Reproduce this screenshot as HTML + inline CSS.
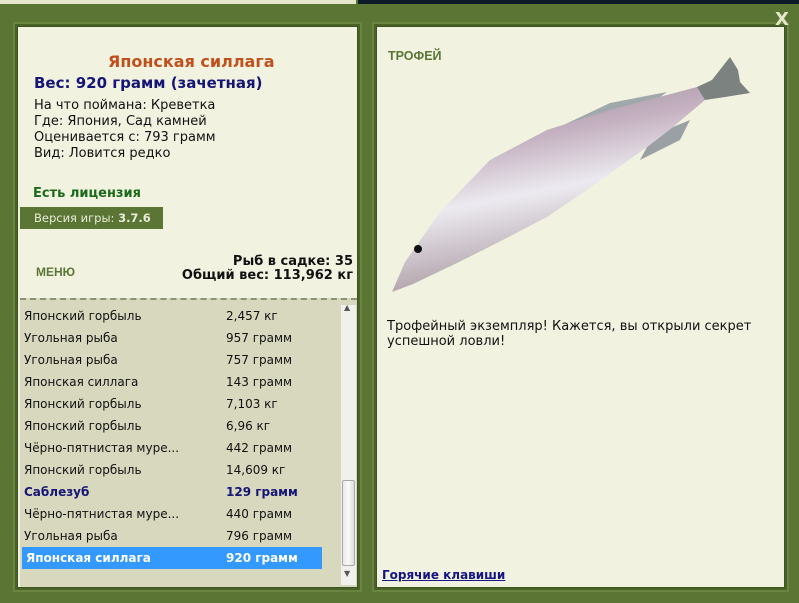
<!DOCTYPE html>
<html><head><meta charset="utf-8"><style>
*{margin:0;padding:0;box-sizing:border-box}
body{width:799px;height:603px;overflow:hidden;background:#5b7535;position:relative;font-family:Tahoma,"DejaVu Sans","Liberation Sans",sans-serif;font-size:13px;color:#111}
.a{position:absolute;white-space:nowrap}
.panel{position:absolute;background:#f2f2e1;border:2px solid #4a6228;box-shadow:0 0 0 2px #6a8540, inset 0 0 0 1px #3d5220}
.row{position:absolute;left:24px;height:22px;line-height:22px;width:298px;font-size:12px}
.row span{position:absolute;left:202px}
</style></head><body>
<div class="a" style="left:0;top:0;width:356px;height:4px;background:#e6e6cc"></div>
<div class="a" style="left:358px;top:0;width:441px;height:4px;background:#0d1a28"></div>
<div class="panel" style="left:15px;top:24px;width:345px;height:566px"></div>
<div class="panel" style="left:374px;top:24px;width:413px;height:566px"></div>
<div class="a" style="left:20px;top:298px;width:337px;height:289px;background:#d8d8bf;border-top:2px dashed #8a9474"></div>
<div class="a" style="left:108px;top:52px;font-size:16px;font-weight:bold;color:#c0501c">Японская силлага</div>
<div class="a" style="left:34px;top:74px;font-size:15px;font-weight:bold;color:#151575">Вес: 920 грамм (зачетная)</div>
<div class="a" style="left:34px;top:98px;line-height:16px">На что поймана: Креветка<br>Где: Япония, Сад камней<br>Оценивается с: 793 грамм<br>Вид: Ловится редко</div>
<div class="a" style="left:33px;top:186px;font-weight:bold;color:#1a6a1a">Есть лицензия</div>
<div class="a" style="left:20px;top:207px;width:143px;height:22px;background:#5b7535;color:#e8ecd8;line-height:22px;padding-left:14px;font-family:'DejaVu Sans',sans-serif;font-size:11.5px">Версия игры: <b>3.7.6</b></div>
<div class="a" style="left:36px;top:265px;font-weight:900;font-size:12px;color:#5b7535;font-family:'Liberation Sans',sans-serif">МЕНЮ</div>
<div class="a" style="right:446px;top:255px;font-weight:bold;text-align:right;line-height:14px">Рыб в садке: 35<br>Общий вес: 113,962 кг</div>
<div class="row" style="top:305px">Японский горбыль<span>2,457 кг</span></div>
<div class="row" style="top:327px">Угольная рыба<span>957 грамм</span></div>
<div class="row" style="top:349px">Угольная рыба<span>757 грамм</span></div>
<div class="row" style="top:371px">Японская силлага<span>143 грамм</span></div>
<div class="row" style="top:393px">Японский горбыль<span>7,103 кг</span></div>
<div class="row" style="top:415px">Японский горбыль<span>6,96 кг</span></div>
<div class="row" style="top:437px">Чёрно-пятнистая муре...<span>442 грамм</span></div>
<div class="row" style="top:459px">Японский горбыль<span>14,609 кг</span></div>
<div class="row" style="top:481px;font-weight:bold;color:#151575">Саблезуб<span>129 грамм</span></div>
<div class="row" style="top:503px">Чёрно-пятнистая муре...<span>440 грамм</span></div>
<div class="row" style="top:525px">Угольная рыба<span>796 грамм</span></div>
<div class="a" style="left:22px;top:547px;width:300px;height:22px;background:#3399ff"></div>
<div class="row" style="top:547px;font-weight:bold;color:#fff;left:26px"><span style="left:0">Японская силлага</span><span style="left:200px">920 грамм</span></div>
<div class="a" style="left:341px;top:305px;width:15px;height:280px;background:#f0f0ec"></div>
<div class="a" style="left:342px;top:480px;width:13px;height:86px;background:linear-gradient(90deg,#e8e8e8,#fafafa,#dcdcdc);border:1px solid #a8a8a8;border-radius:2px"></div>
<div class="a" style="left:344px;top:303px;font-size:8px;color:#555">▲</div>
<div class="a" style="left:344px;top:569px;font-size:8px;color:#555">▼</div>
<div class="a" style="left:388px;top:49px;font-weight:900;font-size:12.5px;color:#5b7535;font-family:'Liberation Sans',sans-serif">ТРОФЕЙ</div>
<svg class="a" style="left:380px;top:50px" width="400" height="260" viewBox="380 50 400 260">
<defs><linearGradient id="g" x1="0" y1="0" x2="0.3" y2="1"><stop offset="0" stop-color="#8f8590"/><stop offset="0.35" stop-color="#c4b0c0"/><stop offset="0.6" stop-color="#eceaf0"/><stop offset="1" stop-color="#a8969e"/></linearGradient></defs>
<path d="M553,130 L610,103 L667,92 L640,112 L580,135 Z" fill="#a0a8ac"/>
<path d="M647,147 L673,127 L690,120 L680,140 L640,160 Z" fill="#9aa0a4"/>
<path d="M392,292 L405,262 L440,212 L490,160 L547,130 L610,110 L667,95 L697,87 L708,85 L705,100 L673,127 L647,147 L597,183 L547,217 L497,243 L457,263 L413,284 Z" fill="url(#g)"/>
<path d="M697,87 L712,80 L730,57 L738,70 L740,82 L750,93 L725,97 L705,100 Z" fill="#7c8280"/>
<circle cx="418" cy="249" r="4" fill="#111"/>
</svg>
<div class="a" style="left:387px;top:319px;line-height:15px;white-space:normal;width:380px">Трофейный экземпляр! Кажется, вы открыли секрет успешной ловли!</div>
<div class="a" style="left:382px;top:568px;font-weight:bold;color:#151585;text-decoration:underline;font-size:12px">Горячие клавиши</div>
<div class="a" style="left:775px;top:9px;font-weight:900;font-size:18px;color:#e6e6cc;font-family:'DejaVu Sans',sans-serif">X</div>
</body></html>
